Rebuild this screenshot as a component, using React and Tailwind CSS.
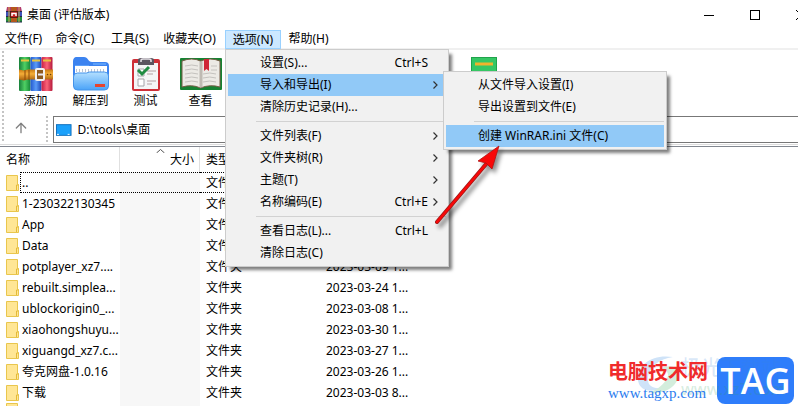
import React from "react";
import { ArrowUp } from "lucide-react";

const files = [
  { name: "..", date: "" },
  { name: "1-230322130345", date: "2023-03-22 1..." },
  { name: "App", date: "2023-03-20 1..." },
  { name: "Data", date: "2023-03-20 1..." },
  { name: "potplayer_xz7....", date: "2023-03-09 1..." },
  { name: "rebuilt.simplea...", date: "2023-03-24 1..." },
  { name: "ublockorigin0_...", date: "2023-03-08 1..." },
  { name: "xiaohongshuyu...", date: "2023-03-30 1..." },
  { name: "xiguangd_xz7.c...", date: "2023-03-27 1..." },
  { name: "夸克网盘-1.0.16", date: "2023-03-26 1..." },
  { name: "下载", date: "2023-03-03 8..." },
];

const optionItems = [
  { label: "设置(S)...", keys: "Ctrl+S" },
  { label: "导入和导出(I)", sub: true, active: true },
  { label: "清除历史记录(H)..." },
  null,
  { label: "文件列表(F)", sub: true },
  { label: "文件夹树(R)", sub: true },
  { label: "主题(T)", sub: true },
  { label: "名称编码(E)", keys: "Ctrl+E", sub: true },
  null,
  { label: "查看日志(L)...", keys: "Ctrl+L" },
  { label: "清除日志(C)" },
];

const importItems = [
  { label: "从文件导入设置(I)" },
  { label: "导出设置到文件(E)" },
  null,
  { label: "创建 WinRAR.ini 文件(C)", active: true },
];

function Books({ className }) {
  return (
    <svg className={className} viewBox="0 0 34 34" aria-hidden="true">
      <defs>
        <linearGradient id="bookG"><stop stopColor="#17803a" /><stop offset=".5" stopColor="#4fd064" /><stop offset="1" stopColor="#138636" /></linearGradient>
        <linearGradient id="bookB"><stop stopColor="#2358cf" /><stop offset=".5" stopColor="#5a9bf8" /><stop offset="1" stopColor="#1d45b5" /></linearGradient>
        <linearGradient id="bookR"><stop stopColor="#c91f45" /><stop offset=".5" stopColor="#fa6478" /><stop offset="1" stopColor="#b5193b" /></linearGradient>
        <linearGradient id="strap" x2="0" y2="1"><stop stopColor="#c97b13" /><stop offset=".4" stopColor="#f5ae38" /><stop offset="1" stopColor="#a65d0b" /></linearGradient>
      </defs>
      <rect x="0" y="0" width="11.500" height="34" rx="1" fill="url(#bookG)" />
      <rect x="11.500" y="0" width="11" height="34" rx="1" fill="url(#bookB)" />
      <rect x="22.500" y="0" width="11" height="34" rx="1" fill="url(#bookR)" />
      <path d="M2 3.500h8M13 3.500h8M24 3.500h8" stroke="#e8c33e" strokeWidth="2" />
      <path d="M0 12.500l5 1 4-1h25v10H9l-4 1-5-1z" fill="url(#strap)" />
      <path d="M6 13v10M10 13v10" stroke="#8b4b09" />
      <rect x="17" y="12" width="8" height="11" rx="1" fill="#8d5b20" stroke="#f3f1f0" strokeWidth="2" />
      <path d="M19 17.500h5" stroke="#e9e9f2" strokeWidth="2" />
      <path d="M28.500 17.500h.1M31.500 17.500h.1" stroke="#6f3c06" strokeWidth="1.500" strokeLinecap="round" />
    </svg>
  );
}

function AppLogo() {
  return (
    <svg className="h-4 w-4" viewBox="0 0 16 16" aria-hidden="true">
      <path d="M1 0h14l1 5H0z" fill="#b23b6d" />
      <path d="M0 5h16v5H0z" fill="#3f51b8" />
      <path d="M0 10h16v5H0z" fill="#238b3e" />
      <path d="M0 4.500h16M0 9.500h16M0 15h16" stroke="#25264c" />
      <path d="M3 0v15M13 0v15" stroke="#d8b04a" />
      <rect x="5" y="0" width="6" height="15" fill="#b4581c" />
      <rect x="4.500" y="4.500" width="7" height="6" fill="#c42222" stroke="#5b1d12" />
      <path d="M6 9V6.500h4V9" fill="none" stroke="#fff" strokeWidth="1.500" />
    </svg>
  );
}

function ExtractIcon() {
  return (
    <svg className="h-[34px] w-9" viewBox="0 0 36 34" aria-hidden="true">
      <defs><linearGradient id="fold" x2="0" y2="1"><stop stopColor="#b5e0ff" /><stop offset="1" stopColor="#4aa3f8" /></linearGradient></defs>
      <path d="M0 5c0-3 1-5 4-5h7c4 0 4 5 8 5h13q4 0 4 4v20H0z" fill="#3c83f0" />
      <path d="M2 9h14M20 7h13" stroke="#5b9ff8" strokeWidth="2" />
      <path d="M2 9h32v13H2z" fill="#fff" />
      <path d="M3 13.500h30" stroke="#b9c4d4" strokeWidth="3" strokeDasharray="1 2" />
      <path d="M.5 20q0-4 4-4h9l3-1h15q4 0 4 4v10q0 4-4 4h-27q-4 0-4-4z" fill="url(#fold)" stroke="#4593ea" />
      <path d="M22 28.500h10" stroke="#e6442e" strokeWidth="3" />
    </svg>
  );
}

function TestIcon() {
  return (
    <svg className="h-[34px] w-9" viewBox="0 0 36 34" aria-hidden="true">
      <rect x="4" y="2" width="28" height="32" rx="2" fill="#ce3038" />
      <path d="M6 6h24v26H6z" fill="#f5f5f6" />
      <path d="M10 3q0-2 3-2h10q3 0 3 2v5H10z" fill="#5b5560" />
      <path d="M13 5V3.500q0-1.500 2-1.500h6q2 0 2 1.500V5" fill="none" stroke="#e7e3e8" strokeWidth="1.500" />
      <path d="M10 12h6v7h-6zM10 22h6v7h-6z" fill="#fff" stroke="#a5a5a9" />
      <path d="M19 14h9M19 17h6M19 24h9M19 27h5" stroke="#b4a0a2" />
      <path d="M10 13l4 4 7-7" fill="none" stroke="#218c42" strokeWidth="3" />
    </svg>
  );
}

function ViewIcon() {
  return (
    <svg className="h-[34px] w-[42px]" viewBox="0 0 42 34" aria-hidden="true">
      <rect y="1" width="42" height="32" rx="1" fill="#168232" />
      <path d="M2 4Q12 0 20.500 4 30 0 40 4v26q-10-3-19.500 1Q12 27 2 30z" fill="#eceae5" stroke="#745c44" />
      <path d="M5 9q7-2 13 0M5 13q7-2 13 0M5 17q7-2 13 0M5 21q7-2 13 0M5 25q7-2 13 0M23 17q7-2 13 0M23 21q7-2 13 0M23 25q7-2 13 0M31 9h6M31 13h6" fill="none" stroke="#c4c2be" />
      <path d="M19.500 4h3v27h-3z" fill="#a29a90" opacity=".6" />
      <path d="M24 2h5v12l-2.500-2L24 14z" fill="#cf2637" />
    </svg>
  );
}

function DriveIcon() {
  return (
    <svg className="h-9 w-[26px]" viewBox="0 0 26 36" aria-hidden="true">
      <rect x=".5" y=".5" width="25" height="34" fill="#35c764" stroke="#20a34b" />
      <path d="M4 7h18" stroke="#f1b32c" strokeWidth="3" />
    </svg>
  );
}

function FolderIcon() {
  return (
    <svg className="h-4 w-[13px] shrink-0" viewBox="0 0 13 16" aria-hidden="true">
      <path d="M.5.500h11v9h1v6H.5z" fill="#ffe695" stroke="#e9c64d" />
      <path d="M10.500 15V10h2" fill="none" stroke="#e4ba38" />
    </svg>
  );
}

function MenuPanel({ items }) {
  return (
    <div role="menu" className="w-56 border border-[#ccc] bg-[#f1f1f1] p-0.5 shadow-[4px_4px_3px_-1px_rgba(0,0,0,0.5)]">
      {items.map((item, i) =>
        item ? (
          <button
            key={item.label}
            role="menuitem"
            className={`flex h-[22px] w-full items-center pl-8 pr-2 text-left ${item.active ? "bg-[#91c9f7]" : ""}`}
          >
            <span className="flex-1">{item.label}</span>
            {item.keys && <span>{item.keys}</span>}
            <span className="flex w-2.5 justify-end">
              {item.sub && (
                <svg className="h-2 w-[5px]" viewBox="0 0 5 8" fill="none" stroke="#333" aria-hidden="true">
                  <path d="M.5.500L4 4 .5 7.500" strokeWidth="1.200" />
                </svg>
              )}
            </span>
          </button>
        ) : (
          <div key={i} role="separator" className="flex h-[7px] items-center pl-7">
            <div className="h-px w-full bg-[#d2d2d2]" />
          </div>
        )
      )}
    </div>
  );
}

function Tool({ icon, label }) {
  return (
    <button className="flex w-[55px] flex-col items-center gap-0.5">
      {icon}
      <span className="leading-4">{label}</span>
    </button>
  );
}

const grip = "w-0.5 shrink-0 bg-[repeating-linear-gradient(to_bottom,#c4c4c4_0_2px,transparent_2px_4px)]";

export default function App() {
  return (
    <div className="relative h-screen w-full overflow-hidden bg-white font-['Noto_Sans','Noto_Sans_CJK_SC',sans-serif] text-xs text-black">
      <header className="flex h-[30px] items-center pl-1.5">
        <AppLogo />
        <h1 className="flex-1 pl-[5px]">桌面 (评估版本)</h1>
        <div className="-mr-[26px] flex">
          <button aria-label="最小化" className="flex h-7 w-[46px] items-center justify-center">
            <span className="h-px w-2.5 bg-black" />
          </button>
          <button aria-label="最大化" className="flex h-7 w-[46px] items-center justify-center">
            <span className="h-2.5 w-2.5 border border-black" />
          </button>
          <button aria-label="关闭" className="flex h-7 w-[46px] items-center justify-center">
            <svg className="h-2.5 w-2.5" viewBox="0 0 10 10" stroke="#000"><path d="M0 0l10 10M10 0L0 10" /></svg>
          </button>
        </div>
      </header>

      <nav className="flex h-5 items-stretch border-b-2 border-[#f0f0f0]">
        <button className="w-12 pr-px">文件(F)</button>
        <button className="w-[58px] pr-1">命令(C)</button>
        <button className="w-12">工具(S)</button>
        <button className="w-[71px]">收藏夹(O)</button>
        <div className="relative">
          <button className="h-[19px] w-14 border border-[#99d1ff] bg-[#cce8ff]">选项(N)</button>
          <div className="absolute left-0 top-[19px] z-10">
            <MenuPanel items={optionItems} />
            <div className="absolute left-[218px] top-[22px]">
              <MenuPanel items={importItems} />
            </div>
          </div>
        </div>
        <button className="w-[55px]">帮助(H)</button>
      </nav>

      <div className="flex h-[94px] pl-0.5">
        <div className={`${grip} my-px`} />
        <div className="min-w-0 flex-1">
          <div className="flex h-[66px] items-start pl-1 pt-[7px]">
            <Tool label="添加" icon={<Books className="h-[34px] w-[34px]" />} />
            <Tool label="解压到" icon={<ExtractIcon />} />
            <Tool label="测试" icon={<TestIcon />} />
            <Tool label="查看" icon={<ViewIcon />} />
            <div className="w-[228px]" />
            <button aria-label="磁盘" className="flex w-[55px] justify-center">
              <DriveIcon />
            </button>
          </div>
          <div className="flex h-7 items-start">
            <button aria-label="上一级" className="flex h-6 w-[42px] items-center justify-center pr-2 text-[#808080]">
              <ArrowUp className="h-4 w-4" />
            </button>
            <div className={`${grip} h-7`} />
            <label className="ml-[5px] flex h-[27px] flex-1 items-center gap-1.5 border border-r-0 border-[#777] pl-0.5">
              <svg className="h-3 w-4" viewBox="0 0 16 12" aria-hidden="true">
                <rect x=".5" y=".5" width="15" height="11" fill="#1ba1fb" stroke="#1371bd" />
                <path d="M1 10.500h14" stroke="#fff" strokeDasharray="2 9" />
              </svg>
              <input aria-label="地址" className="w-full bg-transparent outline-none" defaultValue="D:\tools\桌面" />
            </label>
          </div>
        </div>
      </div>
      <div className="h-[3px] border-b border-t border-b-[#828790] border-t-[#dcdcdc]" />

      <table className="w-full table-fixed border-separate border-spacing-0">
        <colgroup>
          <col className="w-[120px]" />
          <col className="w-20" />
          <col className="w-[120px]" />
          <col className="w-[100px]" />
          <col />
        </colgroup>
        <thead>
          <tr className="h-[25px] text-left">
            <th className="border-r border-[#e0e0e0] p-0 pl-1.5 font-normal">名称</th>
            <th className="relative border-r border-[#e0e0e0] p-0 pr-[5px] text-right font-normal">
              <svg className="absolute left-9 top-0.5 h-1 w-[9px]" viewBox="0 0 9 4" fill="none" stroke="#555"><path d="M.5 4l4-3.500 4 3.500" /></svg>
              大小
            </th>
            <th className="p-0 pl-1.5 font-normal">类型</th>
            <th className="p-0 pl-1.5 font-normal">修改时间</th>
            <th />
          </tr>
        </thead>
        <tbody>
          {files.map((f, i) => (
            <tr key={f.name} className="h-[21px] whitespace-nowrap">
              <td className="p-0">
                <div className="flex h-[21px] items-center pl-1.5">
                  <FolderIcon />
                  <span className={`ml-px flex h-[21px] flex-1 items-center pl-0.5 ${i === 0 ? "border-y border-l border-dotted border-black pl-px" : ""}`}>{f.name}</span>
                </div>
              </td>
              <td className="bg-[#f7f7f7] p-0"><div className={`h-[21px] ${i === 0 ? "border-y border-dotted border-black" : ""}`} /></td>
              <td className="p-0"><div className={`flex h-[21px] items-center pl-1.5 ${i === 0 ? "border-y border-dotted border-black" : ""}`}>文件夹</div></td>
              <td className="p-0 pl-1.5">{f.date}</td>
              <td />
            </tr>
          ))}
          <tr>
            <td className="p-0 pl-1.5"><FolderIcon /></td>
            <td className="bg-[#f7f7f7]" />
          </tr>
        </tbody>
      </table>

      <svg className="pointer-events-none absolute left-[430px] top-[140px] z-20 h-[90px] w-20 drop-shadow-[3px_4px_2px_rgba(0,0,0,0.45)]" viewBox="0 0 80 90" aria-hidden="true">
        <path d="M7 82L57 23" stroke="#9a1b1b" strokeWidth="4" strokeLinecap="round" />
        <path d="M7 82L57 23" stroke="#f80808" strokeWidth="2.500" strokeLinecap="round" />
        <path d="M69 6L48 21l8 2 6 6z" fill="#f80808" stroke="#b01212" strokeWidth=".8" />
      </svg>

      <div className="absolute bottom-0.5 right-1 flex items-center gap-2">
        <div className="z-10 w-[101px] whitespace-nowrap">
          <div className="font-['Noto_Sans_CJK_SC',sans-serif] text-xl font-bold leading-6 text-[#f02b2b]">电脑技术网</div>
          <a href="#top" className="block font-['Liberation_Serif',serif] text-[15px] font-medium leading-5 text-[#2b7cee]">www.tagxp.com</a>
        </div>
        <div className="flex h-[47px] w-[77px] items-center justify-center rounded-lg bg-[#2e7dfb]">
          <span className="z-10 font-['Open_Sans',sans-serif] text-4xl font-semibold text-white">TAG</span>
        </div>
        <div className="absolute -top-0.5 right-2 flex">
          <svg className="h-10 w-11" viewBox="0 0 44 40" fill="none" aria-hidden="true">
            <path d="M36 2C12-2-4 14 2 29c4 8 14 8 22 4-9 1-14-3-13-11C12 12 22 4 36 2z" fill="#cfe3f8" />
            <path d="M12 38c17 2 32-9 29-21-2-7-12-7-18-3 8 0 10 6 6 11-4 6-10 10-17 13z" fill="#d3eddc" />
          </svg>
          <div className="whitespace-nowrap">
            <div className="font-['Noto_Sans_CJK_SC',sans-serif] text-xl font-medium leading-6 text-[#3a86dc]/20">极光下载站</div>
            <div className="text-base font-medium leading-5 text-[#38a060]/20">www.xz7.com</div>
          </div>
        </div>
      </div>
    </div>
  );
}
